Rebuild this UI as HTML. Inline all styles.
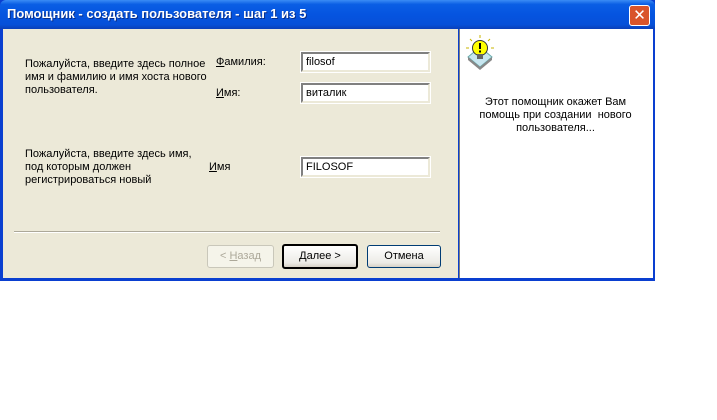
<!DOCTYPE html>
<html><head><meta charset="utf-8"><style>
body{margin:0;width:717px;height:420px;background:#fff;position:relative;overflow:hidden;font-family:Tahoma,"Liberation Sans","DejaVu Sans",sans-serif;font-size:11px;color:#000}
.a{position:absolute}
.win{left:0;top:0;width:655px;height:281px;background:#0a3fd0;}
.title{left:0;top:0;width:655px;height:29px;background:linear-gradient(#3a8cf5,#0a5ee4 15%,#0554e0 50%,#0650d8 85%,#0a3fb8);border-radius:6px 6px 0 0}
.tt{left:7px;top:6px;color:#fff;font-weight:bold;font-size:13px;font-family:"Liberation Sans",sans-serif;text-shadow:1px 1px #0a2f8a}
.close{left:629px;top:5px;width:19px;height:19px;background:#d9542a;border:1px solid #fff;border-radius:3px;color:#fff;text-align:center;font-weight:bold;font-size:15px;line-height:19px}
.body{left:3px;top:29px;width:455px;height:249px;background:#ece9d8}
.panel{left:459px;top:29px;width:193px;height:249px;background:#fff;border-left:1px solid #7f7f7f}
.t{font-family:"Liberation Sans",sans-serif;font-size:11px;line-height:13px}
.inp{background:#fff;border:2px solid;border-color:#808080 #ece9d8 #ece9d8 #808080;outline:1px solid #fff;height:20px;box-sizing:border-box;padding:2px 3px;font-family:"Liberation Sans",sans-serif;font-size:11px}
.btn{height:23px;box-sizing:border-box;border:1px solid #003c74;border-radius:3px;background:linear-gradient(#fff,#ecebe6 80%,#d6d0c5);text-align:center;line-height:21px;font-family:"Liberation Sans",sans-serif;font-size:11px}
u{text-decoration:underline}
</style></head><body>
<div class="a win"></div>
<div class="a title"></div>
<div class="a tt">Помощник - создать пользователя - шаг 1 из 5</div>
<div class="a close">✕</div>
<div class="a body"></div>
<div class="a panel"></div>

<div class="a t" style="left:25px;top:58px">Пожалуйста, введите здесь полное<br>имя и фамилию и имя хоста нового<br>пользователя.</div>
<div class="a t" style="left:216px;top:56px"><u>Ф</u>амилия:</div>
<div class="a t" style="left:216px;top:87px"><u>И</u>мя:</div>
<div class="a inp" style="left:301px;top:52px;width:129px">filosof</div>
<div class="a inp" style="left:301px;top:83px;width:129px">виталик</div>
<div class="a t" style="left:25px;top:148px">Пожалуйста, введите здесь имя,<br>под которым должен<br>регистрироваться новый</div>
<div class="a t" style="left:209px;top:161px"><u>И</u>мя</div>
<div class="a inp" style="left:301px;top:157px;width:129px">FILOSOF</div>

<div class="a" style="left:14px;top:231px;width:426px;height:1px;background:#aca899;border-bottom:1px solid #fff"></div>
<div class="a btn" style="left:207px;top:245px;width:67px;border-color:#c9c7ba;color:#aca899;background:#f5f4ea">&lt; <u>Н</u>азад</div>
<div class="a btn" style="left:282px;top:244px;width:76px;height:25px;border:2px solid #000;line-height:20px"><u>Д</u>алее &gt;</div>
<div class="a btn" style="left:367px;top:245px;width:74px">Отмена</div>

<svg class="a" style="left:463px;top:33px" width="34" height="40" viewBox="0 0 34 40">
<g stroke="#c8b400" stroke-width="1"><line x1="17" y1="2" x2="17" y2="5"/><line x1="7" y1="6" x2="9" y2="8"/><line x1="27" y1="6" x2="25" y2="8"/><line x1="3" y1="15" x2="6" y2="15"/><line x1="28" y1="15" x2="31" y2="15"/></g>
<path d="M5 24 L17 14 L29 24 L17 34 Z" fill="#c8e6f0" stroke="#6aa" />
<path d="M5 27 L17 37 L29 27 L29 24 L17 34 L5 24Z" fill="#888"/>
<circle cx="17" cy="15" r="7.5" fill="#ffff00" stroke="#333"/>
<rect x="14" y="21" width="6" height="5" fill="#666"/>
<rect x="16" y="10" width="2" height="6" fill="#000"/><rect x="16" y="17.5" width="2" height="2" fill="#000"/>
</svg>
<div class="a t" style="left:463px;top:96px;width:185px;text-align:center">Этот помощник окажет Вам<br>помощь при создании&nbsp; нового<br>пользователя...</div>
</body></html>
